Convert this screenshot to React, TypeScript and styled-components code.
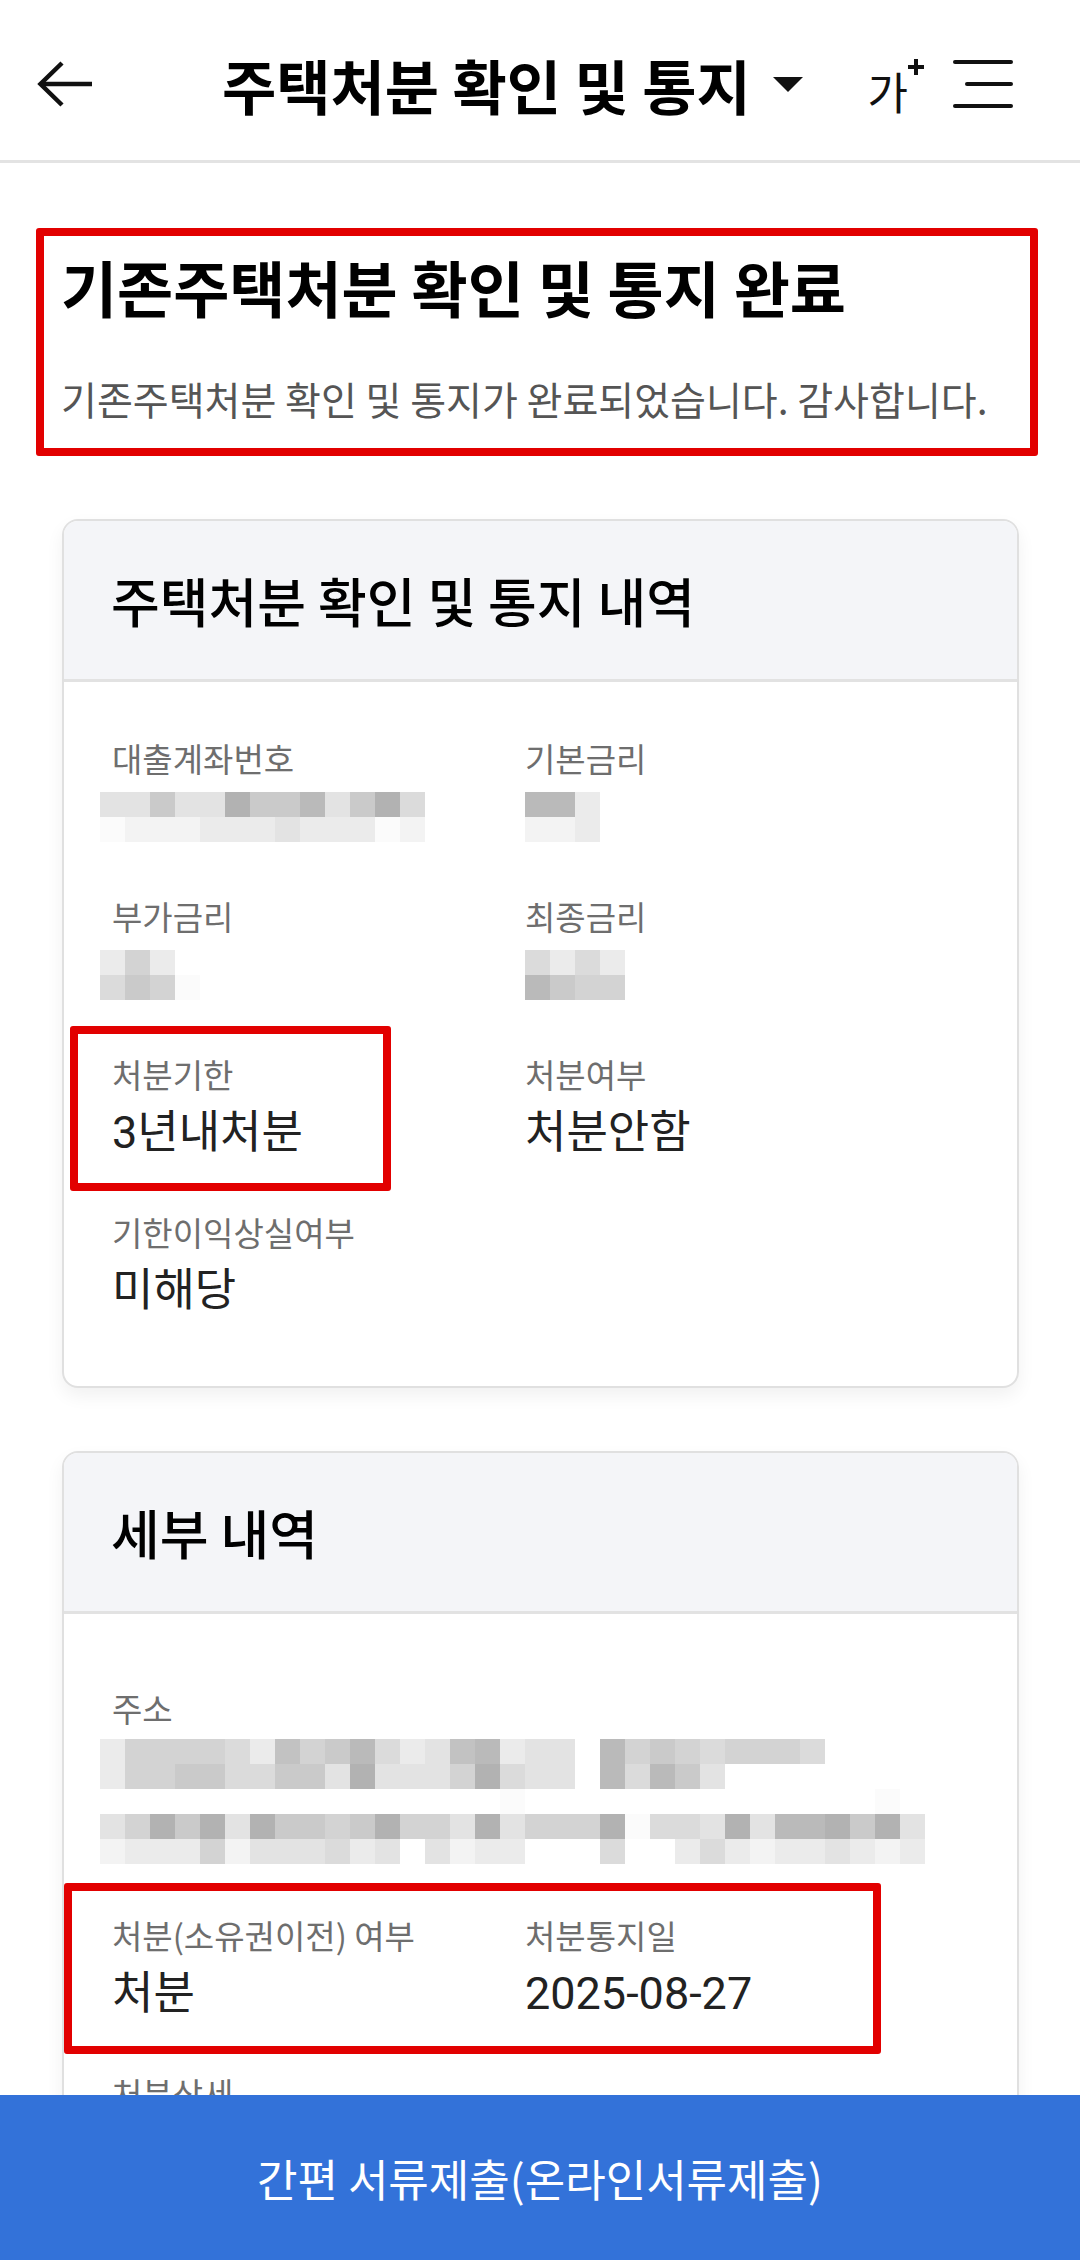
import styled, { createGlobalStyle, css } from "styled-components"

const GlobalStyle = createGlobalStyle`
* { box-sizing: border-box; }
body {
  margin: 0;
  background: #fff;
  color: #111;
  font-family: "Noto Sans CJK KR", "Noto Sans", sans-serif;
}
`

const Page = styled.div`
min-height: 2260px;
padding-bottom: 200px;
`

const Header = styled.header`
height: 163px;
display: flex;
align-items: center;
padding: 8px 65px 0 37px;
border-bottom: 3px solid #e3e3e3;
`

const IconButton = styled.button`
border: 0;
background: none;
padding: 0;
display: flex;
color: #111;
`

const TitleGroup = styled.div`
display: flex;
align-items: center;
margin-left: 127px;
`

const HeaderTitle = styled.h1`
margin: 0;
font-size: 59px;
line-height: 1;
font-weight: 700;
color: #000;
`

const Caret = styled.svg`
margin-left: 22px;
margin-top: 2px;
`

const Actions = styled.div`
margin-left: auto;
display: flex;
align-items: center;
gap: 25px;
`

const FontButton = styled.div`
display: flex;
align-items: flex-start;
color: #111;
`

const Ga = styled.span`
font-size: 44px;
line-height: 44px;
margin-top: 14px;
`

const PlusMark = styled.svg`
margin-left: -2px;
margin-top: 2px;
`

const Intro = styled.section`
margin: 65px 42px 0 36px;
border: 8px solid #e20000;
border-radius: 3px;
padding: 14px 17px 25px;
`

const Heading = styled.h2`
margin: 0;
font-size: 61px;
line-height: 74px;
font-weight: 700;
color: #000;
white-space: nowrap;
`

const Lead = styled.p`
margin: 49px 0 0;
font-size: 39px;
line-height: 50px;
color: #555;
white-space: nowrap;
`

const Card = styled.section`
margin: 63px 61px 0 62px;
border: 2px solid #e0e0e0;
border-radius: 16px;
overflow: hidden;
background: #fff;
box-shadow: 0 8px 18px rgba(0, 0, 0, 0.06);
`

const CardHeader = styled.div`
height: 161px;
display: flex;
align-items: center;
padding: 0 47px;
background: #f4f5f8;
border-bottom: 3px solid #e2e2e2;
`

const CardTitle = styled.h3`
margin: 0;
font-size: 53px;
line-height: 1;
font-weight: 500;
color: #000;
`

const CardBody = styled.div<{ $top: number }>`
display: grid;
grid-template-columns: 413px 1fr;
row-gap: 51px;
padding: ${(p) => p.$top}px 48px 67px;
`

const highlightBox = css`
&::before {
  content: "";
  position: absolute;
  box-sizing: border-box;
  border: 8px solid #e20000;
  border-radius: 3px;
  pointer-events: none;
}
`

const Field = styled.div<{ $wide?: boolean; $highlight?: boolean }>`
position: relative;
display: flex;
flex-direction: column;
gap: 11px;
grid-column: ${(p) => (p.$wide ? "1 / -1" : "auto")};
${(p) =>
  p.$highlight &&
  css`
    ${highlightBox}
    &::before {
      top: -28px;
      bottom: -30px;
      left: -42px;
      width: 321px;
    }
  `}
`

const FieldRow = styled.div<{ $highlight?: boolean }>`
position: relative;
grid-column: 1 / -1;
display: grid;
grid-template-columns: 413px 1fr;
${(p) =>
  p.$highlight &&
  css`
    ${highlightBox}
    &::before {
      top: -32px;
      bottom: -32px;
      left: -48px;
      width: 817px;
    }
  `}
`

const Label = styled.span`
font-size: 33px;
line-height: 40px;
color: #6e6e6e;
white-space: nowrap;
`

const Value = styled.div`
min-height: 56px;
display: flex;
align-items: center;
font-family: Roboto, "Noto Sans CJK KR", sans-serif;
font-size: 45px;
line-height: 56px;
color: #222;
`

const shades: Record<string, string> = {
  " ": "transparent",
  "0": "#fbfbfb",
  "1": "#f3f3f3",
  "2": "#ebebeb",
  "3": "#e3e3e3",
  "4": "#dbdbdb",
  "5": "#d3d3d3",
  "6": "#cacaca",
  "7": "#c2c2c2",
  "8": "#bababa",
  "9": "#b2b2b2",
}

const MosaicGrid = styled.div<{ $cols: number; $shift: number }>`
display: grid;
grid-template-columns: repeat(${(p) => p.$cols}, 25px);
grid-auto-rows: 25px;
margin-left: ${(p) => p.$shift}px;
`

const Cell = styled.span<{ $shade: string }>`
background: ${(p) => shades[p.$shade] ?? "transparent"};
`

function Mosaic({ rows, shift = 0 }: { rows: string[]; shift?: number }) {
  const cols = Math.max(...rows.map((r) => r.length))
  return (
    <MosaicGrid $cols={cols} $shift={shift}>
      {rows.flatMap((r, i) =>
        r.padEnd(cols, " ").split("").map((c, j) => <Cell key={i + "-" + j} $shade={c} />)
      )}
    </MosaicGrid>
  )
}

const SubmitBar = styled.button`
position: fixed;
left: 0;
right: 0;
bottom: 0;
height: 165px;
border: 0;
background: #3372d9;
color: #fff;
font-family: "Noto Sans CJK KR", "Noto Sans", sans-serif;
font-size: 44px;
line-height: 1;
`

const account = ["3363396683694", "0111222322201"]
const baseRate = ["882", "112"]
const extraRate = ["252 ", "4650"]
const finalRate = ["4242", "8655"]
const address = [
  "2555542756842378233 856545554",
  "2556644663933359433 84863",
  "                0              0",
  "359693966569553935559044393889693",
  "122251333423 3122   4  2421223212",
]

type Item = { label: string; value?: string; mosaic?: string[]; shift?: number; highlight?: boolean }

const loanItems: Item[] = [
  { label: "대출계좌번호", mosaic: account, shift: -12 },
  { label: "기본금리", mosaic: baseRate },
  { label: "부가금리", mosaic: extraRate, shift: -12 },
  { label: "최종금리", mosaic: finalRate },
  { label: "처분기한", value: "3년내처분", highlight: true },
  { label: "처분여부", value: "처분안함" },
  { label: "기한이익상실여부", value: "미해당" },
]

function InfoField({ item }: { item: Item }) {
  return (
    <Field $highlight={item.highlight}>
      <Label>{item.label}</Label>
      <Value>{item.mosaic ? <Mosaic rows={item.mosaic} shift={item.shift} /> : item.value}</Value>
    </Field>
  )
}

export default function App() {
  return (
    <Page>
      <GlobalStyle />
      <Header>
        <IconButton aria-label="뒤로">
          <svg width="58" height="48" viewBox="0 0 58 48" fill="none" stroke="#111" strokeWidth="4.5">
            <path d="M4 24H55" />
            <path d="M25 3L3.5 24L25 45" />
          </svg>
        </IconButton>
        <TitleGroup>
          <HeaderTitle>주택처분 확인 및 통지</HeaderTitle>
          <Caret width="30" height="16" viewBox="0 0 30 16">
            <polygon points="0,0 30,0 15,15" fill="#111" />
          </Caret>
        </TitleGroup>
        <Actions>
          <FontButton aria-label="글자 크기">
            <Ga>가</Ga>
            <PlusMark width="20" height="20" viewBox="0 0 20 20" stroke="#111" strokeWidth="4">
              <path d="M10 2V18M2 10H18" />
            </PlusMark>
          </FontButton>
          <IconButton aria-label="메뉴">
            <svg width="64" height="52" viewBox="0 0 64 52" fill="none" stroke="#111" strokeWidth="4" strokeLinecap="round">
              <path d="M4 4H60" />
              <path d="M16 26H60" />
              <path d="M4 48H60" />
            </svg>
          </IconButton>
        </Actions>
      </Header>

      <Intro>
        <Heading>기존주택처분 확인 및 통지 완료</Heading>
        <Lead>기존주택처분 확인 및 통지가 완료되었습니다. 감사합니다.</Lead>
      </Intro>

      <Card>
        <CardHeader>
          <CardTitle>주택처분 확인 및 통지 내역</CardTitle>
        </CardHeader>
        <CardBody $top={56}>
          {loanItems.map((item) => (
            <InfoField key={item.label} item={item} />
          ))}
        </CardBody>
      </Card>

      <Card>
        <CardHeader>
          <CardTitle>세부 내역</CardTitle>
        </CardHeader>
        <CardBody $top={74}>
          <Field $wide>
            <Label>주소</Label>
            <Value>
              <Mosaic rows={address} shift={-12} />
            </Value>
          </Field>
          <FieldRow $highlight>
            <InfoField item={{ label: "처분(소유권이전) 여부", value: "처분" }} />
            <InfoField item={{ label: "처분통지일", value: "2025-08-27" }} />
          </FieldRow>
          <Field $wide>
            <Label>처분상세</Label>
            <Value />
          </Field>
        </CardBody>
      </Card>

      <SubmitBar>간편 서류제출(온라인서류제출)</SubmitBar>
    </Page>
  )
}
